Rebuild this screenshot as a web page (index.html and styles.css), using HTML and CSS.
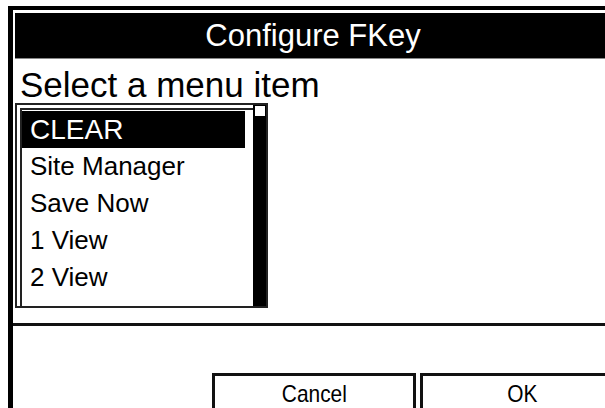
FILE: index.html
```html
<!DOCTYPE html>
<html lang="en">
<head>
  <meta charset="UTF-8">
  <meta name="viewport" content="width=device-width, initial-scale=1.0">
  <title>Configure FKey</title>
  <link rel="stylesheet" href="styles.css">
</head>
<body>
  <div class="screen">
    <div class="title">Configure FKey</div>
    <div class="prompt">Select a menu item</div>

    <div class="listbox">
      <ul class="list">
        <li class="item selected">CLEAR</li>
        <li class="item">Site Manager</li>
        <li class="item">Save Now</li>
        <li class="item">1 View</li>
        <li class="item">2 View</li>
      </ul>
      <div class="scroll"><div class="thumb"></div></div>
    </div>

    <div class="sep"></div>

    <div class="buttons">
      <button class="btn"><span>Cancel</span></button>
      <button class="btn"><span>OK</span></button>
    </div>
  </div>
</body>
</html>
```

FILE: styles.css
```css
body {
  margin: 0;
  background-color: white;
  overflow: hidden;
  font-family: "Liberation Sans", Arial, sans-serif;
  color: #000;
}
.screen {
  margin: 6px 0 0 8px;
  width: 640px;
  height: 420px;
  border-left: 5px solid #000;
  border-top: 4px solid #000;
  padding: 3px 0 0 2px;
  box-sizing: border-box;
}
.title {
  width: 596px;
  height: 45px;
  background-color: #000;
  color: white;
  text-align: center;
  font-size: 31px;
  line-height: 46px;
  border-bottom: 1px solid #888;
}
.prompt {
  font-size: 35px;
  line-height: 34px;
  margin-top: 9px;
  padding-left: 5px;
}
.listbox {
  display: flex;
  width: 253px;
  height: 205px;
  margin-top: 1px;
  border: 2px solid #222;
  box-sizing: border-box;
}
.list {
  flex: 1;
  list-style: none;
  margin: 3px 0 0 3px;
  padding: 1px 0 0 0;
  border-top: 2px solid #222;
  border-left: 2px solid #222;
}
.item {
  height: 37px;
  line-height: 37px;
  padding-left: 8px;
  margin-right: 8px;
  font-size: 26px;
}
.item.selected {
  background-color: #000;
  color: white;
  font-size: 28px;
}
.scroll {
  width: 13px;
  padding: 1px;
  background-color: #000;
  box-sizing: border-box;
}
.thumb {
  width: 10px;
  height: 10px;
  background-color: white;
  margin-left: 1px;
}
.sep {
  margin: 15px 0 0 -2px;
  border-top: 3px solid #111;
}
.buttons {
  display: flex;
  gap: 4px;
  margin: 47px 0 0 197px;
}
.btn {
  width: 204px;
  height: 60px;
  padding: 3px 0 0 0;
  border: 3px solid #111;
  background-color: white;
  font-family: "Liberation Sans", Arial, sans-serif;
  font-size: 24px;
  line-height: 30px;
  display: flex;
  justify-content: center;
  align-items: flex-start;
  color: #000;
}
.btn span {
  display: inline-block;
  transform: scaleX(0.87);
}
```
